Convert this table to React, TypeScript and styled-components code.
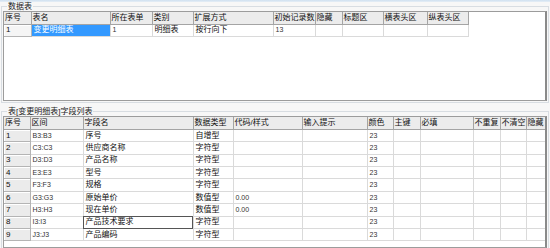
import React from "react"
import styled, { createGlobalStyle, css } from "styled-components"

const GlobalStyle = createGlobalStyle`
  html, body {
    margin: 0;
    padding: 0;
    background: #f7f7f7;
  }
`

const Form = styled.div`
  width: 550px;
  height: 248px;
  overflow: hidden;
  display: flex;
  flex-direction: column;
  background: #f7f7f7;
  font-family: "Liberation Sans", "Noto Sans CJK SC", sans-serif;
  font-size: 8px;
  color: #111;
`

const TitleStrip = styled.div`
  height: 2px;
  flex: none;
  background: linear-gradient(#cfe0f0, #e6eef6);
`

const Group = styled.fieldset<{ $grow?: boolean }>`
  margin: 0 1px 4px 1px;
  padding: 0 1px 1px 1px;
  border: 1px solid #d8dde2;
  min-width: 0;
  display: flex;
  flex-direction: column;
  ${({ $grow }) =>
    $grow &&
    css`
      flex: 1;
      margin-bottom: 0;
      border-bottom: none;
      padding-bottom: 0;
      min-height: 0;
    `}
`

const GroupTitle = styled.legend`
  margin-left: 4px;
  padding: 0 1px;
  line-height: 9px;
  font-size: 8px;
  color: #222;
`

/**
 * Sunken grid frame, white inside, darker edge on the right like the old VCL grid.
 */
const GridFrame = styled.div<{ $height?: number }>`
  background: #fff;
  border: 1px solid #9c9c9c;
  border-right: 2px solid #8a8a8a;
  overflow: hidden;
  ${({ $height }) =>
    $height
      ? css`
          height: ${$height}px;
          flex: none;
        `
      : css`
          flex: 1;
        `}
`

const Table = styled.table`
  border-collapse: collapse;
  table-layout: fixed;
`

const Row = styled.tr<{ $h: number }>`
  height: ${({ $h }) => $h}px;
`

const HeadCell = styled.th`
  background: #ececec;
  border: 1px solid #a4a4a4;
  border-top: none;
  font-weight: normal;
  text-align: left;
  padding: 0 0 0 1px;
  white-space: nowrap;
  overflow: hidden;
  line-height: 10px;
  color: #111;
`

const FixedCell = styled.td<{ $light?: boolean }>`
  background: ${({ $light }) => ($light ? "#f5f5f5" : "#ebebeb")};
  border: 1px solid #b4b4b4;
  border-left: none;
  box-shadow: inset 1px 1px 0 #fff;
  padding: 0 0 0 2px;
  white-space: nowrap;
  overflow: hidden;
  line-height: 10px;
`

const Cell = styled.td<{ $selected?: boolean; $focused?: boolean; $latin?: boolean }>`
  border: 1px solid #dadada;
  padding: 0 0 0 2px;
  white-space: nowrap;
  overflow: hidden;
  line-height: 10px;
  color: ${({ $latin }) => ($latin ? "#333" : "#111")};
  font-size: ${({ $latin }) => ($latin ? "7px" : "8px")};
  ${({ $selected }) =>
    $selected &&
    css`
      background: #3399ff;
      color: #fff;
    `}
  ${({ $focused }) =>
    $focused &&
    css`
      outline: 1px solid #555;
      outline-offset: -1px;
    `}
`

const isLatin = (s: string) => /^[\x00-\x7f]*$/.test(s)

type GridProps = {
  widths: number[]
  headers: string[]
  rows: string[][]
  rowHeight: number
  lightFixed?: boolean
  selected?: [number, number]
  focused?: [number, number]
}

const DataGrid = ({ widths, headers, rows, rowHeight, lightFixed, selected, focused }: GridProps) => {
  const total = widths.reduce((a, b) => a + b, 0)
  return (
    <Table style={{ width: total }}>
      <colgroup>
        {widths.map((w, i) => (
          <col key={i} style={{ width: w }} />
        ))}
      </colgroup>
      <thead>
        <Row $h={rowHeight}>
          {headers.map((h, i) => (
            <HeadCell key={i} style={i === 0 ? { borderLeft: "none" } : undefined}>
              {h}
            </HeadCell>
          ))}
        </Row>
      </thead>
      <tbody>
        {rows.map((r, ri) => (
          <Row key={ri} $h={rowHeight}>
            {r.map((v, ci) =>
              ci === 0 ? (
                <FixedCell key={ci} $light={lightFixed}>
                  {v}
                </FixedCell>
              ) : (
                <Cell
                  key={ci}
                  $latin={v !== "" && isLatin(v)}
                  $selected={selected?.[0] === ri && selected?.[1] === ci}
                  $focused={focused?.[0] === ri && focused?.[1] === ci}
                >
                  {v}
                </Cell>
              )
            )}
          </Row>
        ))}
      </tbody>
    </Table>
  )
}

const tableWidths = [27, 79, 42, 41, 80, 42, 27, 41, 44, 41]
const tableHeaders = ["序号", "表名", "所在表单", "类别", "扩展方式", "初始记录数", "隐藏", "标题区", "横表头区", "纵表头区"]
const tableRows = [["1", "变更明细表", "1", "明细表", "按行向下", "13", "", "", "", ""]]

const fieldWidths = [26, 53, 110, 40, 69, 65, 26, 27, 53, 27, 26, 19]
const fieldHeaders = ["序号", "区间", "字段名", "数据类型", "代码/样式", "输入提示", "颜色", "主键", "必填", "不重复", "不清空", "隐藏"]

const fields: [string, string, string, string][] = [
  ["B3:B3", "序号", "自增型", ""],
  ["C3:C3", "供应商名称", "字符型", ""],
  ["D3:D3", "产品名称", "字符型", ""],
  ["E3:E3", "型号", "字符型", ""],
  ["F3:F3", "规格", "字符型", ""],
  ["G3:G3", "原始单价", "数值型", "0.00"],
  ["H3:H3", "现在单价", "数值型", "0.00"],
  ["I3:I3", "产品技术要求", "字符型", ""],
  ["J3:J3", "产品编码", "字符型", ""],
]

const fieldRows = fields.map(([range, name, type, fmt], i) => [
  String(i + 1),
  range,
  name,
  type,
  fmt,
  "",
  "23",
  "",
  "",
  "",
  "",
  "",
])

const App = () => (
  <Form>
    <GlobalStyle />
    <TitleStrip />
    <Group>
      <GroupTitle>数据表</GroupTitle>
      <GridFrame $height={88}>
        <DataGrid
          widths={tableWidths}
          headers={tableHeaders}
          rows={tableRows}
          rowHeight={12}
          lightFixed
          selected={[0, 1]}
        />
      </GridFrame>
    </Group>
    <Group $grow>
      <GroupTitle>表[变更明细表]字段列表</GroupTitle>
      <GridFrame>
        <DataGrid
          widths={fieldWidths}
          headers={fieldHeaders}
          rows={fieldRows}
          rowHeight={12.4}
          focused={[7, 2]}
        />
      </GridFrame>
    </Group>
  </Form>
)

export default App
